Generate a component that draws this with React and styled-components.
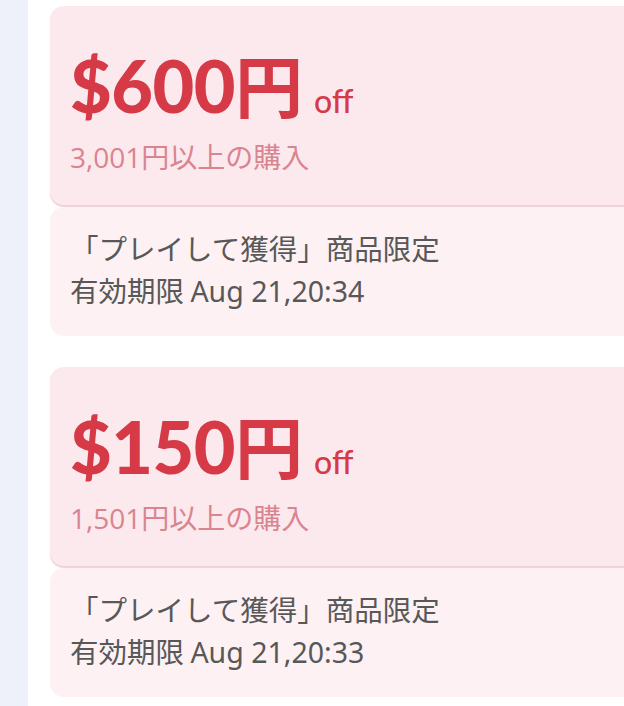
import React from "react";
import styled, { createGlobalStyle } from "styled-components";

const Global = createGlobalStyle`
  html, body { margin: 0; padding: 0; background: #ffffff; overflow: hidden; }
  body { font-family: "Noto Sans CJK JP", "Noto Sans", sans-serif; }
`;

const Page = styled.div`
  display: flex;
  width: 624px;
  height: 706px;
  overflow: hidden;
`;

const Sidebar = styled.div`
  flex: 0 0 28px;
  background: #eff1fa;
`;

const Main = styled.div`
  flex: 1;
  padding: 6px 0 0 22px;
  display: flex;
  flex-direction: column;
  gap: 31px;
  min-width: 0;
`;

const Card = styled.div`
  width: 620px;
  display: flex;
  flex-direction: column;
  gap: 2px;
`;

const Top = styled.div`
  height: 199px;
  box-sizing: border-box;
  background: #fce9ee;
  border-radius: 14px;
  padding: 39px 20px 0 20px;
  box-shadow: 0 1.5px 1px rgba(226, 170, 184, 0.55);
`;

const AmountRow = styled.div`
  display: flex;
  align-items: baseline;
  color: #d63a47;
  height: 78px;
`;

const Amount = styled.span`
  font-family: "Lato", "Noto Sans CJK JP", sans-serif;
  font-weight: 900;
  font-size: 72px;
  line-height: 78px;
  letter-spacing: -0.5px;
`;

const Yen = styled.span`
  font-family: "Noto Sans CJK JP", sans-serif;
  font-weight: 700;
  font-size: 68px;
  line-height: 78px;
`;

const Off = styled.span`
  font-family: "Lato", sans-serif;
  font-weight: 500;
  font-size: 32px;
  margin-left: 11px;
`;

const Min = styled.div`
  margin-top: 17px;
  font-family: "Open Sans", "Noto Sans CJK JP", sans-serif;
  font-weight: 400;
  font-size: 28px;
  line-height: 34px;
  color: #d9848f;
`;

const Bottom = styled.div`
  height: 129px;
  box-sizing: border-box;
  background: #fdf1f4;
  border-radius: 14px;
  padding: 20px 20px 0 20px;
  color: #585858;
  font-size: 28.5px;
  line-height: 42px;
`;

const Line = styled.div`
  white-space: nowrap;
  font-family: "Noto Sans CJK JP", sans-serif;
`;

const Latin = styled.span`
  font-family: "Noto Sans", "Noto Sans CJK JP", sans-serif;
`;

const coupons = [
  { amount: "$600", min: "3,001円以上の購入", time: "Aug 21,20:34" },
  { amount: "$150", min: "1,501円以上の購入", time: "Aug 21,20:33" },
];

export default function App() {
  return (
    <>
      <Global />
      <Page>
        <Sidebar />
        <Main>
          {coupons.map((c) => (
            <Card key={c.time}>
              <Top>
                <AmountRow>
                  <Amount>{c.amount}</Amount>
                  <Yen>円</Yen>
                  <Off>off</Off>
                </AmountRow>
                <Min>{c.min}</Min>
              </Top>
              <Bottom>
                <Line>「プレイして獲得」商品限定</Line>
                <Line>
                  有効期限 <Latin>{c.time}</Latin>
                </Line>
              </Bottom>
            </Card>
          ))}
        </Main>
      </Page>
    </>
  );
}
